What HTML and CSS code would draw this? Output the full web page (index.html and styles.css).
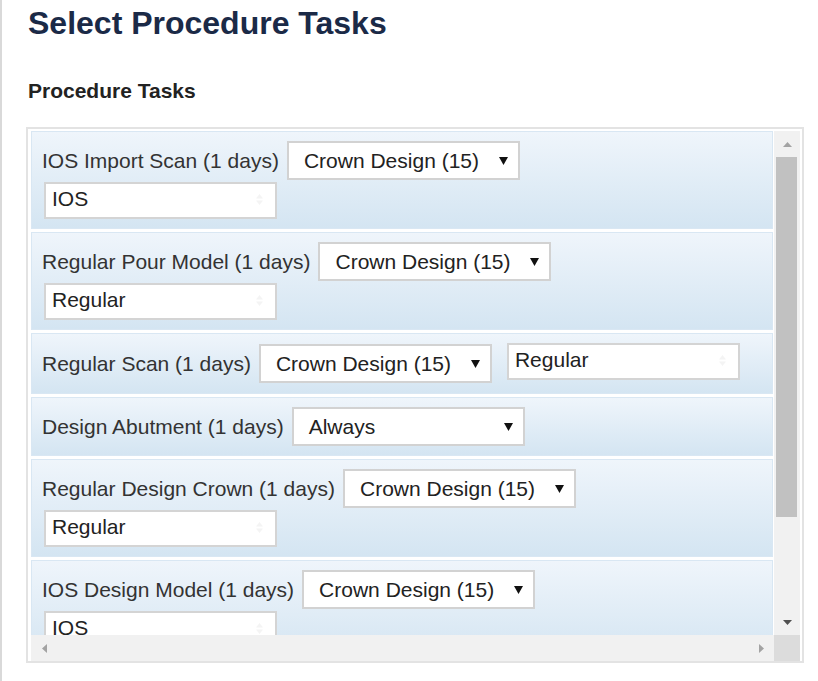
FILE: index.html
```html
<!DOCTYPE html>
<html>
<head>
<meta charset="utf-8">
<title>Select Procedure Tasks</title>
<link rel="stylesheet" href="styles.css">
</head>
<body>
<div class="page">
  <h1 class="title">Select Procedure Tasks</h1>
  <h2 class="subtitle">Procedure Tasks</h2>
  <div class="box">
    <div class="viewport">
      <div class="task">
        <span class="task-label">IOS Import Scan (1 days)</span>
        <div class="select"><span>Crown Design (15)</span><svg class="caret" width="9" height="8" viewBox="0 0 9 8"><polygon points="0,0 9,0 4.5,8"/></svg></div>
        <div class="field"><span>IOS</span><svg class="field-icon" width="7" height="11" viewBox="0 0 7 11"><polygon points="0,4.5 3.5,0 7,4.5"/><polygon points="0,6.5 7,6.5 3.5,11"/></svg></div>
      </div>
      <div class="task">
        <span class="task-label">Regular Pour Model (1 days)</span>
        <div class="select"><span>Crown Design (15)</span><svg class="caret" width="9" height="8" viewBox="0 0 9 8"><polygon points="0,0 9,0 4.5,8"/></svg></div>
        <div class="field"><span>Regular</span><svg class="field-icon" width="7" height="11" viewBox="0 0 7 11"><polygon points="0,4.5 3.5,0 7,4.5"/><polygon points="0,6.5 7,6.5 3.5,11"/></svg></div>
      </div>
      <div class="task">
        <span class="task-label">Regular Scan (1 days)</span>
        <div class="select"><span>Crown Design (15)</span><svg class="caret" width="9" height="8" viewBox="0 0 9 8"><polygon points="0,0 9,0 4.5,8"/></svg></div>
        <div class="field field-raised"><span>Regular</span><svg class="field-icon" width="7" height="11" viewBox="0 0 7 11"><polygon points="0,4.5 3.5,0 7,4.5"/><polygon points="0,6.5 7,6.5 3.5,11"/></svg></div>
      </div>
      <div class="task">
        <span class="task-label">Design Abutment (1 days)</span>
        <div class="select"><span>Always</span><svg class="caret" width="9" height="8" viewBox="0 0 9 8"><polygon points="0,0 9,0 4.5,8"/></svg></div>
      </div>
      <div class="task">
        <span class="task-label">Regular Design Crown (1 days)</span>
        <div class="select"><span>Crown Design (15)</span><svg class="caret" width="9" height="8" viewBox="0 0 9 8"><polygon points="0,0 9,0 4.5,8"/></svg></div>
        <div class="field"><span>Regular</span><svg class="field-icon" width="7" height="11" viewBox="0 0 7 11"><polygon points="0,4.5 3.5,0 7,4.5"/><polygon points="0,6.5 7,6.5 3.5,11"/></svg></div>
      </div>
      <div class="task">
        <span class="task-label">IOS Design Model (1 days)</span>
        <div class="select"><span>Crown Design (15)</span><svg class="caret" width="9" height="8" viewBox="0 0 9 8"><polygon points="0,0 9,0 4.5,8"/></svg></div>
        <div class="field"><span>IOS</span><svg class="field-icon" width="7" height="11" viewBox="0 0 7 11"><polygon points="0,4.5 3.5,0 7,4.5"/><polygon points="0,6.5 7,6.5 3.5,11"/></svg></div>
      </div>
    </div>
    <div class="vbar">
      <div class="sb-btn"><svg width="9" height="5" viewBox="0 0 9 5"><polygon class="arrow-off" points="0,5 4.5,0 9,5"/></svg></div>
      <div class="thumb"></div>
      <div class="sb-fill"></div>
      <div class="sb-btn"><svg width="9" height="5" viewBox="0 0 9 5"><polygon class="arrow-on" points="0,0 9,0 4.5,5"/></svg></div>
    </div>
    <div class="hbar">
      <div class="sb-btn-h"><svg width="5" height="9" viewBox="0 0 5 9"><polygon class="arrow-off" points="5,0 5,9 0,4.5"/></svg></div>
      <div class="sb-btn-h"><svg width="5" height="9" viewBox="0 0 5 9"><polygon class="arrow-off" points="0,0 5,4.5 0,9"/></svg></div>
    </div>
    <div class="corner"></div>
  </div>
</div>
</body>
</html>
```

FILE: styles.css
```css
html, body {
  margin: 0;
  padding: 0;
  background: #ffffff;
}

body {
  font-family: "Liberation Sans", Arial, sans-serif;
}

.page {
  box-sizing: border-box;
  height: 681px;
  border-left: 2px solid #d9d9d9;
  padding: 3px 0 0 26px;
  overflow: hidden;
}

.title {
  margin: 0;
  font-size: 32px;
  line-height: 40px;
  font-weight: bold;
  color: #1b2a47;
}

.subtitle {
  margin: 36px 0 0 0;
  font-size: 21px;
  line-height: 24px;
  font-weight: bold;
  color: #222222;
}

.box {
  box-sizing: border-box;
  width: 778px;
  height: 536px;
  margin: 24px 0 0 -2px;
  border: 2px solid #e3e3e3;
  padding: 2px 2px 0 3px;
  display: grid;
  grid-template-columns: 1fr 26px;
  grid-template-rows: 1fr 26px;
  background: #ffffff;
}

.viewport {
  min-height: 0;
  overflow: hidden;
  padding: 0 1px 0 0;
  display: flex;
  flex-direction: column;
  gap: 3px;
}

.task {
  flex-shrink: 0;
  display: flex;
  flex-wrap: wrap;
  align-items: center;
  row-gap: 2px;
  padding: 9px 8px 9px 10px;
  border: 1px solid #d9e7f3;
  background: linear-gradient(to bottom, #eff5fb 0%, #d4e5f2 100%);
}

.task-label {
  font-size: 21px;
  line-height: 24px;
  color: #333333;
  margin-right: 8px;
  white-space: nowrap;
}

.select {
  box-sizing: border-box;
  width: 233px;
  height: 39px;
  margin-right: 13px;
  border: 2px solid #d2d2d2;
  background: #ffffff;
  padding: 0 10px 0 15px;
  display: flex;
  align-items: center;
  justify-content: space-between;
  font-size: 21px;
  line-height: 24px;
  color: #222222;
}

.caret {
  fill: #111111;
  flex-shrink: 0;
}

.field {
  box-sizing: border-box;
  width: 233px;
  height: 37px;
  margin-left: 2px;
  border: 2px solid #d4d4d4;
  background: #ffffff;
  padding: 0 12px 3px 6px;
  display: flex;
  align-items: center;
  justify-content: space-between;
  font-size: 21px;
  line-height: 24px;
  color: #222222;
}

.field-raised {
  margin-bottom: 4px;
}

.field-icon {
  fill: #f4f4f4;
  flex-shrink: 0;
}

.vbar {
  background: #f1f1f1;
  display: flex;
  flex-direction: column;
  min-height: 0;
}

.sb-btn {
  height: 26px;
  flex-shrink: 0;
  display: flex;
  align-items: center;
  justify-content: center;
}

.thumb {
  height: 360px;
  flex-shrink: 0;
  margin: 0 3px 0 2px;
  background: #c1c1c1;
}

.sb-fill {
  flex: 1;
}

.hbar {
  background: #f1f1f1;
  display: flex;
  justify-content: space-between;
}

.sb-btn-h {
  width: 26px;
  display: flex;
  align-items: center;
  justify-content: center;
}

.arrow-off {
  fill: #a3a3a3;
}

.arrow-on {
  fill: #505050;
}

.corner {
  background: #dcdcdc;
}
```
